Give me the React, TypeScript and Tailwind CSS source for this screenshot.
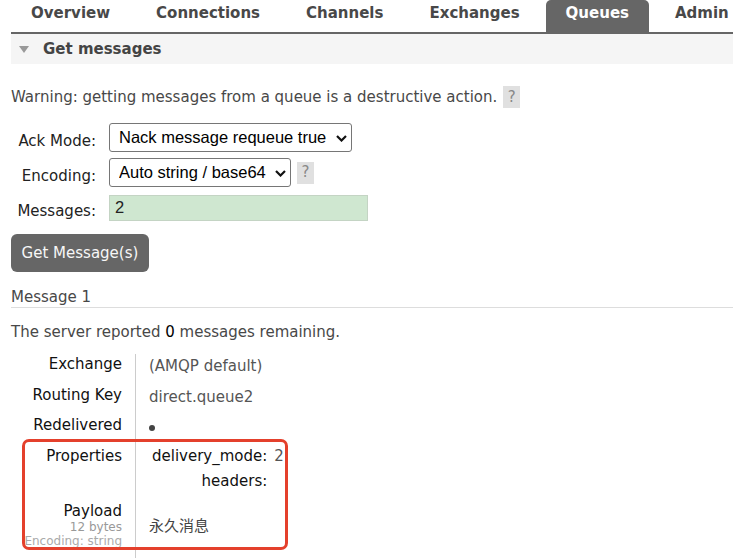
import type { ReactNode } from 'react'

const tabs = ['Overview', 'Connections', 'Channels', 'Exchanges', 'Queues', 'Admin']

export default function App() {
  return (
    <div className="relative w-[733px] h-[558px] overflow-hidden bg-white font-['DejaVu_Sans','Noto_Sans_CJK_SC',sans-serif] text-[15px] text-[#484848]">
      {/* Top nav */}
      <ul className="ml-[11px] flex gap-[6px] border-b-2 border-[#666]">
        {tabs.map((t) => (
          <li
            key={t}
            className={
              t === 'Queues'
                ? 'h-[32px] px-5 pt-[4px] text-[15px] leading-[18px] font-bold bg-[#666] text-white rounded-t-[5px]'
                : 'h-[32px] px-5 pt-[4px] text-[15px] leading-[18px] font-bold text-[#484848]'
            }
          >
            {t}
          </li>
        ))}
      </ul>

      {/* Section header */}
      <div className="ml-[11px] h-[30px] bg-[#f5f5f5] flex items-center">
        <svg width="10" height="7" viewBox="0 0 10 7" className="ml-[8px]">
          <polygon points="0,0 10,0 5,7" fill="#999" />
        </svg>
        <span className="ml-[14px] text-[15px] font-bold text-[#444]">Get messages</span>
      </div>

      {/* Warning */}
      <div className="mt-[22px] ml-[11px] flex items-center h-[22px] gap-[6px]">
        <span className="leading-[20px]">
          Warning: getting messages from a queue is a destructive action.
        </span>
        <Help />
      </div>

      {/* Form */}
      <div className="mt-[15px] pl-[10px]">
        <FormRow label="Ack Mode:">
          <Select width="w-[243px]" value="Nack message requeue true" />
        </FormRow>
        <FormRow label="Encoding:" className="mt-[6px]">
          <Select width="w-[182px]" value="Auto string / base64" />
          <div className="ml-[6px]">
            <Help />
          </div>
        </FormRow>
        <FormRow label="Messages:" className="mt-[7px]">
          <input
            type="text"
            defaultValue="2"
            className="w-[259px] h-[26px] border border-[#c4d4c4] bg-[#cfe7d0] pl-[5px] font-['Liberation_Sans',sans-serif] text-[16.5px] text-[#222] outline-none"
          />
        </FormRow>
      </div>

      <button
        type="button"
        className="mt-[13px] ml-[11px] w-[138px] h-[38px] rounded-[6px] bg-[#666] text-[15px] text-[#f7f7f7]"
      >
        Get Message(s)
      </button>

      <div className="mt-[15px] ml-[11px] h-[21px] leading-[20px] border-b border-[#ddd]">
        Message 1
      </div>

      <p className="mt-[14px] ml-[11px] leading-[20px]">
        The server reported <span className="text-black">0</span> messages remaining.
      </p>

      {/* Message details */}
      <div className="mt-[12px] grid grid-cols-[135px_1fr] leading-[20px]">
        <Label>Exchange</Label>
        <Value>(AMQP default)</Value>

        <Label>Routing Key</Label>
        <Value>direct.queue2</Value>

        <Label>Redelivered</Label>
        <Value>
          <span className="inline-block w-[6px] h-[6px] rounded-full bg-[#444] align-middle" />
        </Value>

        <Label>Properties</Label>
        <div className="border-l border-[#ccc] pl-[13px] pb-[10.5px]">
          <div className="grid grid-cols-[auto_auto] justify-start gap-y-[5px]">
            <span className="pl-[3px] text-right text-[#111]">delivery_mode:</span>
            <span className="pl-[7px] text-[#555]">2</span>
            <span className="pl-[3px] text-right text-[#111]">headers:</span>
            <span />
          </div>
        </div>

        <div className="pr-[13px] text-right">
          <div className="pt-[1.5px] leading-[17px] text-[#111]">Payload</div>
          <div className="text-[12px] leading-[14.5px] text-[#999]">12 bytes</div>
          <div className="text-[12px] leading-[14.5px] text-[#aaa]">Encoding: string</div>
        </div>
        <div className="border-l border-[#ccc] pl-[13px] pt-[15px] text-[#444]">永久消息</div>

        <div className="h-[30px]" />
        <div className="h-[30px] border-l border-[#ccc]" />
      </div>

      {/* annotation box */}
      <div className="absolute left-[22px] top-[439px] w-[266px] h-[111px] border-[3px] border-[#e4402c] rounded-[7px]" />
    </div>
  )
}

function Help() {
  return (
    <span className="w-[17px] h-[22px] bg-[#e0e0e0] text-[#888] text-[15px] flex items-center justify-center">
      ?
    </span>
  )
}

function FormRow({
  label,
  className = '',
  children,
}: {
  label: string
  className?: string
  children: ReactNode
}) {
  return (
    <div className={`flex items-center ${className}`}>
      <span className="w-[86px] pt-[7px] text-right leading-[20px] text-[#222]">{label}</span>
      <div className="ml-[13px] flex items-center">{children}</div>
    </div>
  )
}

function Select({ width, value }: { width: string; value: string }) {
  return (
    <div className={`relative h-[29px] ${width}`}>
      <select className="appearance-none w-full h-full border border-[#767676] rounded-[3px] bg-white pl-[9px] font-['Liberation_Sans',sans-serif] text-[16.5px] text-black outline-none">
        <option>{value}</option>
      </select>
      <svg
        width="11"
        height="7"
        viewBox="0 0 11 7"
        className="absolute right-[5px] top-[12px] pointer-events-none"
      >
        <path d="M1 1 L5.5 5.5 L10 1" fill="none" stroke="#111" strokeWidth="2.2" />
      </svg>
    </div>
  )
}

function Label({ children }: { children: ReactNode }) {
  return <div className="pr-[13px] pb-[10.5px] text-right text-[#111]">{children}</div>
}

function Value({ children }: { children: ReactNode }) {
  return (
    <div className="border-l border-[#ccc] pl-[13px] pt-[2.4px] pb-[8px] text-[#555]">{children}</div>
  )
}
